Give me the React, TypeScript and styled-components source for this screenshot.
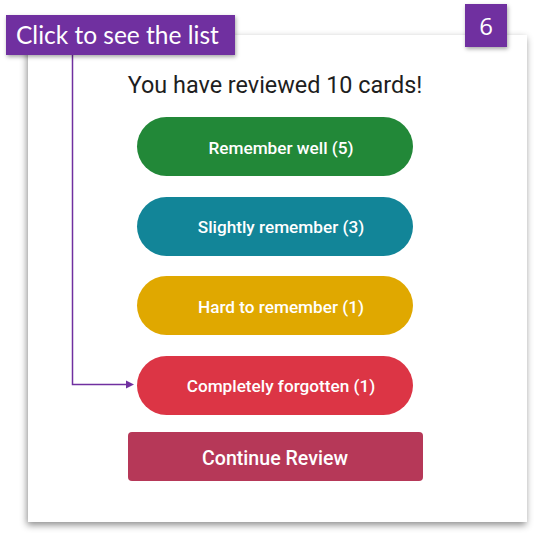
import React from "react";
import styled, { createGlobalStyle } from "styled-components";

const Global = createGlobalStyle`
  html, body { margin: 0; padding: 0; background: #ffffff; }
  body { font-family: Roboto, "Liberation Sans", sans-serif; }
`;

const Page = styled.div`
  position: relative;
  width: 547px;
  height: 543px;
  overflow: hidden;
  background: #ffffff;
  padding-top: 35px;
  box-sizing: border-box;
`;

const Card = styled.div`
  margin-left: 28px;
  width: 499px;
  height: 487px;
  box-sizing: border-box;
  background: #ffffff;
  box-shadow: -1px 3px 7px rgba(0, 0, 0, 0.45);
  padding: 37px 5px 0 0;
  display: flex;
  flex-direction: column;
  align-items: center;
`;

const Title = styled.h1`
  margin: 0 0 19px;
  font-family: Roboto, "Liberation Sans", sans-serif;
  font-weight: 400;
  font-size: 23.4px;
  line-height: 26px;
  color: #1e1e1e;
`;

const Pills = styled.div`
  display: flex;
  flex-direction: column;
  gap: 20.5px;
  margin-bottom: 17.5px;
`;

const Pill = styled.button<{ $bg: string }>`
  width: 276px;
  height: 59px;
  border: none;
  border-radius: 30px;
  background: ${(p) => p.$bg};
  color: #ffffff;
  font-family: Roboto, "Liberation Sans", sans-serif;
  font-weight: 500;
  font-size: 17.2px;
  padding: 2px 0 0 12px;
  display: flex;
  align-items: center;
  justify-content: center;
`;

const ContinueButton = styled.button`
  width: 295px;
  height: 49px;
  border: none;
  border-radius: 4px;
  background: #b63858;
  color: #ffffff;
  font-family: Roboto, "Liberation Sans", sans-serif;
  font-weight: 500;
  font-size: 19.6px;
  padding: 3px 0 0;
`;

const Callout = styled.div`
  position: absolute;
  left: 6px;
  top: 15px;
  width: 229px;
  height: 40px;
  box-sizing: border-box;
  background: #7030a0;
  color: #ffffff;
  font-family: Lato, "Open Sans", sans-serif;
  font-size: 24.5px;
  line-height: 40px;
  padding-left: 10px;
  box-shadow: 1px 2px 4px rgba(0, 0, 0, 0.35);
  white-space: nowrap;
`;

const StepBadge = styled.div`
  position: absolute;
  left: 465px;
  top: 4px;
  width: 42px;
  height: 43px;
  background: #7030a0;
  color: #ffffff;
  font-family: "Open Sans", Lato, sans-serif;
  font-size: 24px;
  display: flex;
  align-items: center;
  justify-content: center;
  box-shadow: 1px 2px 4px rgba(0, 0, 0, 0.35);
`;

const Connector = styled.svg`
  position: absolute;
  left: 0;
  top: 0;
  pointer-events: none;
`;

const results = [
  { label: "Remember well (5)", color: "#228838" },
  { label: "Slightly remember (3)", color: "#128598" },
  { label: "Hard to remember (1)", color: "#e0a800" },
  { label: "Completely forgotten (1)", color: "#dc3545" },
];

export default function App() {
  return (
    <>
      <Global />
      <Page>
        <Card>
          <Title>You have reviewed 10 cards!</Title>
          <Pills>
            {results.map((r) => (
              <Pill key={r.label} $bg={r.color}>
                {r.label}
              </Pill>
            ))}
          </Pills>
          <ContinueButton>Continue Review</ContinueButton>
        </Card>
        <Connector width="547" height="543" viewBox="0 0 547 543">
          <path d="M72.5 55 V384.5 H127" fill="none" stroke="#7030a0" strokeWidth="1.5" />
          <path d="M126 380.5 L134 384.5 L126 388.5 Z" fill="#7030a0" />
        </Connector>
        <Callout>Click to see the list</Callout>
        <StepBadge>6</StepBadge>
      </Page>
    </>
  );
}
